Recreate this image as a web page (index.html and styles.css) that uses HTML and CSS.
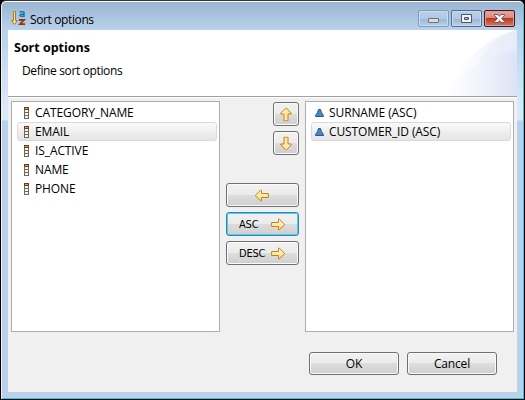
FILE: index.html
```html
<!DOCTYPE html>
<html lang="en">
<head>
<meta charset="utf-8">
<title>Sort options</title>
<link rel="stylesheet" href="styles.css">
</head>
<body>
<svg class="defs" width="0" height="0">
  <defs>
    <linearGradient id="gold" x1="0" y1="0" x2="0" y2="1"><stop offset="0" stop-color="#fff9dc"/><stop offset="1" stop-color="#ffd875"/></linearGradient>
    <symbol id="arrow" viewBox="0 0 14 13"><path d="M.6 4.5H7.5V1.2H8.3L13.4 6V7L8.3 11.8H7.5V8.5H.6Z" fill="url(#gold)" stroke="#bd861c"/></symbol>
    <symbol id="column" viewBox="0 0 5 12"><path d="M0 0H5V12H0Z" fill="#6c6961"/><path d="M0 0H5V3H0Z" fill="#6e3d20"/><path d="M1 1H4V2H1Z" fill="#e69b4c"/><path d="M1 3H4V5H1ZM1 6H4V8H1ZM1 9H4V11H1Z" fill="#f4f5e4"/></symbol>
    <symbol id="asc" viewBox="0 0 9 8"><path d="M3.5 .5H5.5L6.5 3.5L8.5 6.5V7.5H.5V6.5L2.5 3.5Z" fill="#4a87c0" stroke="#235d97"/></symbol>
  </defs>
</svg>
<div class="window">
  <header class="titlebar">
    <svg class="app-icon" width="15" height="15" viewBox="0 0 15 15">
      <path d="M2.5 .5H4.5V9.5H6.3L3.5 13.5L.7 9.5H2.5Z" fill="#ffe69a" stroke="#ad7b18"/>
      <path d="M8.5 .8H12Q13 .8 13 1.8V6M13 3.2H10Q9 3.2 9 4.2Q9 5.2 10 5.2H13" fill="none" stroke="#087cb8" stroke-width="1.5"/>
      <path d="M8 9H13L9 13.2H14.2" fill="none" stroke="#9b3410" stroke-width="1.8"/>
    </svg>
    <span class="caption">Sort options</span>
    <div class="controls">
      <span class="control"><svg width="29" height="15"><rect x="9.5" y="7.5" width="10" height="4" rx=".5" fill="#dddcd7" stroke="#6f7075"/></svg></span>
      <span class="control strong"><svg width="29" height="15"><path d="M9.5 3.5H19.5V11.5H9.5Z" fill="#f4f4f4" stroke="#515465"/><path d="M12.5 6.5H16.5V8.5H12.5Z" fill="#9dbbdc" stroke="#515465"/></svg></span>
      <span class="control close"><svg width="29" height="15"><path d="M9.5 3.5H13L14.5 5.3L16 3.5H19.5V4.5L16.7 7.5L19.5 10.5V11.5H16L14.5 9.7L13 11.5H9.5V10.5L12.3 7.5L9.5 4.5Z" fill="#f5f5f5" stroke="#61596a"/></svg></span>
    </div>
  </header>
  <main class="client">
    <section class="banner">
      <div class="banner-text"><h1>Sort options</h1><p>Define sort options</p></div>
      <svg class="swoosh" width="75" height="66" viewBox="0 0 75 66">
        <defs><linearGradient id="haze"><stop offset="0" stop-color="#fff"/><stop offset=".35" stop-color="#fafbfe"/><stop offset="1" stop-color="#e6ecf9"/></linearGradient><linearGradient id="haze2"><stop offset="0" stop-color="#fff"/><stop offset=".55" stop-color="#eff2fb"/><stop offset="1" stop-color="#dce3f6"/></linearGradient></defs>
        <path d="M4 66Q30 10 75 0V66Z" fill="url(#haze)"/><path d="M36 34Q48 8 75 2V34Z" fill="#e4eaf8" opacity=".4"/><path d="M4 66Q32 26 75 21V66Z" fill="url(#haze2)"/>
      </svg>
    </section>
    <section class="workspace">
      <ul class="list available">
        <li><svg width="5" height="12"><use href="#column"/></svg><span>CATEGORY_NAME</span></li>
        <li class="selected"><svg width="5" height="12"><use href="#column"/></svg><span>EMAIL</span></li>
        <li><svg width="5" height="12"><use href="#column"/></svg><span>IS_ACTIVE</span></li>
        <li><svg width="5" height="12"><use href="#column"/></svg><span>NAME</span></li>
        <li><svg width="5" height="12"><use href="#column"/></svg><span>PHONE</span></li>
      </ul>
      <div class="actions">
        <button class="btn square" aria-label="Up"><svg class="up" width="14" height="13"><use href="#arrow"/></svg></button>
        <button class="btn square" aria-label="Down"><svg class="down" width="14" height="13"><use href="#arrow"/></svg></button>
        <button class="btn remove" aria-label="Remove"><svg class="left" width="14" height="13"><use href="#arrow"/></svg></button>
        <button class="btn sort focused"><span>ASC</span><svg width="14" height="13"><use href="#arrow"/></svg></button>
        <button class="btn sort"><span>DESC</span><svg width="14" height="13"><use href="#arrow"/></svg></button>
      </div>
      <ul class="list chosen">
        <li><svg width="9" height="8"><use href="#asc"/></svg><span>SURNAME (ASC)</span></li>
        <li class="selected"><svg width="9" height="8"><use href="#asc"/></svg><span>CUSTOMER_ID (ASC)</span></li>
      </ul>
    </section>
    <footer class="footer"><button class="btn">OK</button><button class="btn">Cancel</button></footer>
  </main>
</div>
</body>
</html>
```
FILE: styles.css
```css
* { box-sizing: border-box; }
body { margin: 0; width: 525px; height: 400px; overflow: hidden; background: #000; font: 12px/19px "Open Sans", "Noto Sans", sans-serif; color: #000; letter-spacing: -.35px; }
.defs { position: absolute; }
svg { display: block; flex: none; }
.window { width: 525px; height: 400px; border: 1px solid #000; border-top-color: #343038; border-radius: 6px 6px 0 0; padding: 0 6px 6px; background: linear-gradient(#99b4d1 0, #b9d1ea 28px, #dce8f6 105px, #dce8f6 119px, #b9d1ea 120px); box-shadow: inset 0 1px #fff, inset 1px 0 #e8f1fa, inset -1px -1px #2bc8df; }
.titlebar { height: 29px; display: flex; align-items: flex-start; padding: 9px 1px 0 4px; }
.app-icon { margin-top: 1px; }
.caption { margin: 0 0 0 4px; letter-spacing: -.38px; }
.controls { display: flex; gap: 2px; margin-left: auto; margin-right: 2px; }
.control { width: 31px; height: 17px; border: 1px solid #7f9bbd; border-radius: 2px; background: linear-gradient(#b9cfe8 0, #b0c9e5 50%, #98b6d8 51%, #b8d1eb); box-shadow: inset 0 0 0 1px #c9dcf0; }
.strong { border-color: #526c91; }
.close { border-color: #4a1421; background: linear-gradient(#e8a99b 0, #d98779 48%, #b93823 50%, #d77b60); box-shadow: inset 0 0 0 1px #e0a096; }
.client { height: 362px; margin: 0 0 0 1px; width: 509px; background: #f0f0f0; }
.banner { height: 66px; background: #fff; display: flex; justify-content: space-between; }
.banner-text { padding: 8px 0 0 6px; }
h1 { margin: 0; font-size: 12.5px; line-height: 19px; font-weight: 700; letter-spacing: 0; }
p { margin: 4px 0 0 8px; letter-spacing: -.36px; }
.workspace { height: 236px; border-top: 1px solid #a0a0a0; box-shadow: inset 0 1px #fff; padding: 4px 3px 0; display: flex; }
.list { list-style: none; margin: 0; padding: 1px 2px 0 5px; height: 231px; width: 209px; background: #fff; border: 1px solid #abadb3; letter-spacing: -.1px; }
.list li { height: 19px; display: flex; align-items: center; border: 1px solid transparent; border-radius: 3px; padding-left: 6px; }
.list li span { margin-left: 6px; }
.list li.selected { border-color: #d9d9d9; background: linear-gradient(#fafafa, #e5e5e5); }
.list.chosen li { padding-left: 3px; }
.list.chosen li span { margin-left: 5px; }
.actions { width: 85px; padding: 1px 6px 0; display: flex; flex-direction: column; align-items: flex-end; gap: 5px; }
.btn { height: 24px; width: 73px; display: flex; align-items: center; justify-content: center; margin: 0; padding: 0; border: 1px solid #707070; border-radius: 3px; background: linear-gradient(#f2f2f2 0, #ebebeb 48%, #dddddd 50%, #cfcfcf); box-shadow: inset 0 0 0 1px #fafafa; font: inherit; letter-spacing: inherit; color: #000; }
.btn.square { width: 26px; }
.remove { margin-top: 23px; }
.remove svg { margin-right: 2px; }
.sort { justify-content: flex-start; padding-left: 12px; font: 11px "DejaVu Sans Condensed", "DejaVu Sans", sans-serif; letter-spacing: -.2px; }
.sort span { width: 32px; text-align: left; }
.focused { border-color: #3c7fb1; box-shadow: inset 0 0 0 1px #48d0f7; }
.up { transform: rotate(-90deg); }
.down { transform: rotate(90deg); }
.left { transform: scaleX(-1); }
.footer { display: flex; justify-content: flex-end; gap: 8px; padding: 20px 20px 0 0; }
.footer .btn { width: 90px; height: 23px; letter-spacing: -.15px; }
```
